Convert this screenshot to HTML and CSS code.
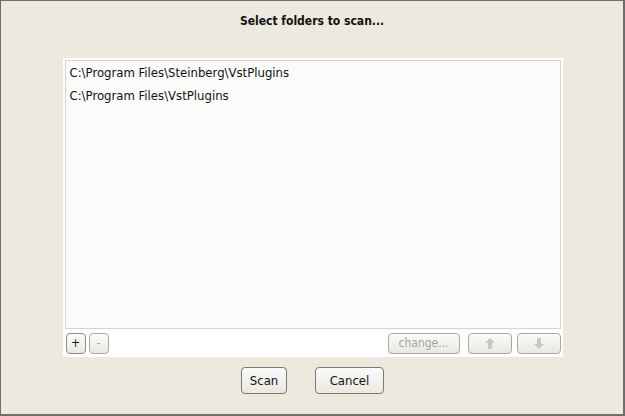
FILE: index.html
```html
<!DOCTYPE html>
<html>
<head>
<meta charset="utf-8">
<link rel="stylesheet" href="styles.css">
</head>
<body>
<div class="window">
  <div class="title">Select folders to scan...</div>
  <div class="panel">
    <div class="list">
      <div class="item">C:\Program Files\Steinberg\VstPlugins</div>
      <div class="item">C:\Program Files\VstPlugins</div>
    </div>
    <div class="toolbar">
      <button class="btn small">+</button>
      <button class="btn small dis">-</button>
      <div class="spacer"></div>
      <button class="btn change dis">change...</button>
      <button class="btn arrow dis"><svg width="10" height="11" viewBox="0 0 10 11"><path d="M5 0 L10 5 H7 V11 H3 V5 H0 Z" fill="#c8c8c4"/></svg></button>
      <button class="btn arrow dis"><svg width="10" height="11" viewBox="0 0 10 11"><path d="M5 11 L10 6 H7 V0 H3 V6 H0 Z" fill="#c8c8c4"/></svg></button>
    </div>
  </div>
  <div class="actions">
    <button class="btn big scan">Scan</button>
    <button class="btn big cancel">Cancel</button>
  </div>
</div>
</body>
</html>
```
FILE: styles.css
```css
html, body {
  margin: 0;
  padding: 0;
}
body {
  width: 625px;
  height: 416px;
  font-family: "DejaVu Sans Condensed", "DejaVu Sans", sans-serif;
  font-size: 12px;
  color: #111;
}
.window {
  box-sizing: border-box;
  width: 625px;
  height: 416px;
  background: #ece9df;
  border: 1px solid #6e6e6e;
  border-bottom-width: 2px;
  border-right-width: 2px;
  display: flex;
  flex-direction: column;
  align-items: center;
}
.title {
  font-weight: bold;
  font-size: 12px;
  margin-top: 12px;
  height: 16px;
  line-height: 16px;
}
.panel {
  margin-top: 29px;
  margin-left: 1px;
  width: 500px;
  height: 299px;
  background: #fff;
  box-sizing: border-box;
  padding: 2px;
  display: flex;
  flex-direction: column;
}
.list {
  flex: 1;
  border: 1px solid #d4d4d0;
  background: #fbfbfa;
  padding: 0 4px;
  font-size: 13px;
}
.item {
  height: 23px;
  line-height: 23px;
  white-space: nowrap;
}
.toolbar {
  display: flex;
  align-items: center;
  height: 22px;
  margin-top: 3px;
  padding: 0 0 1px 1px;
}
.spacer { flex: 1; }
.btn {
  font-family: inherit;
  box-sizing: border-box;
  border: 1px solid #8b8b86;
  border-radius: 4px;
  background: linear-gradient(#fbfbf9, #e9e8e2);
  padding: 0;
  margin: 0;
  color: #111;
  display: flex;
  align-items: center;
  justify-content: center;
}
.btn.dis { color: #a4a49f; border-color: #a8a8a3; }
.small {
  width: 20px;
  height: 21px;
  font-size: 12px;
  margin-right: 3px;
}
.change {
  width: 72px;
  height: 21px;
  font-size: 12px;
  margin-right: 8px;
}
.arrow {
  width: 44px;
  height: 21px;
  margin-right: 5px;
}
.arrow:last-child { margin-right: 0; }
.actions {
  display: flex;
  gap: 28px;
  margin-top: 10px;
  margin-left: 1px;
}
.big {
  height: 27px;
  font-size: 13px;
  border-color: #7a7a75;
}
.scan { width: 46px; }
.cancel { width: 69px; }
```
